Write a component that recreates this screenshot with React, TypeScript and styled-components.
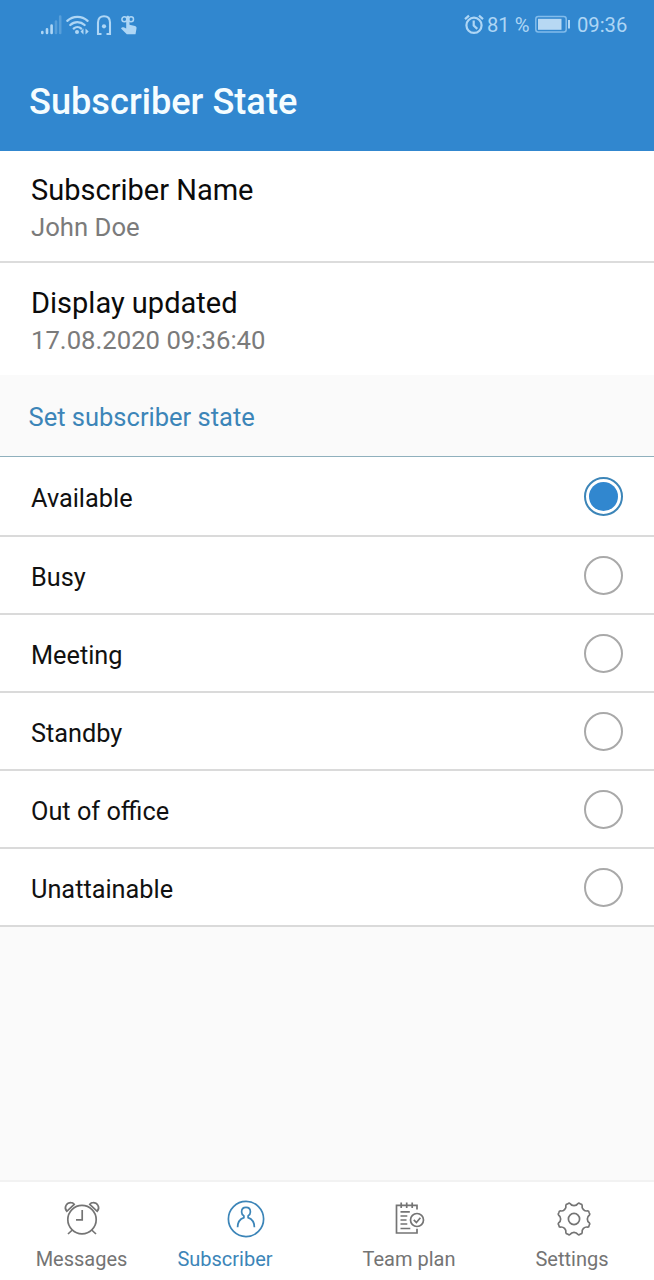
import React from "react";
import styled, { createGlobalStyle } from "styled-components";

const BLUE = "#3187cf";
const ACCENT = "#3c85b8";
const PALE = "#aed6f5";
const GREY = "#747474";

const GlobalStyle = createGlobalStyle`
  * { box-sizing: border-box; }
  body { margin: 0; background: #fafafa; font-family: Roboto, "Liberation Sans", sans-serif; }
  svg { display: block; overflow: visible; }
`;

const Screen = styled.div`
  width: 654px;
  height: 1280px;
  display: flex;
  flex-direction: column;
  overflow: hidden;
  background: #fafafa;
`;

const Header = styled.header`
  height: 151px;
  flex: none;
  background: ${BLUE};
`;

const StatusBar = styled.div`
  height: 50px;
  display: flex;
  justify-content: space-between;
  padding: 0 27px 0 40px;
  color: ${PALE};
`;

const StatusGroup = styled.div`
  display: flex;
  align-items: center;
`;

const StatusText = styled.span<{ $width: number }>`
  width: ${(p) => p.$width}px;
  font-size: 20.2px;
  line-height: 24px;
  white-space: nowrap;
`;

const Title = styled.h1`
  margin: 0;
  padding: 30px 0 0 29px;
  color: #f5fdff;
  font-size: 36.2px;
  line-height: 44px;
  font-weight: 500;
  white-space: nowrap;
`;

const InfoRow = styled.section<{ $divider?: boolean }>`
  height: 112px;
  flex: none;
  padding: ${(p) => (p.$divider ? 21 : 22)}px 31px 0;
  background: #fff;
  border-bottom: ${(p) => (p.$divider ? "2px solid #dcdcdc" : "none")};
`;

const InfoLabel = styled.div`
  font-size: 29px;
  line-height: 36px;
  color: #0b0b0b;
`;

const InfoValue = styled.div`
  padding-top: 3px;
  font-size: 25.7px;
  line-height: 32px;
  color: #7b7b7b;
`;

const SectionTitle = styled.h2`
  height: 82px;
  flex: none;
  margin: 0;
  padding: 2px 0 0 28.5px;
  border-bottom: 1px solid #8fb0bd;
  color: ${ACCENT};
  font-size: 25.5px;
  font-weight: 400;
  line-height: 80px;
`;

const StateList = styled.div`
  flex: none;
  display: flex;
  flex-direction: column;
`;

const StateRow = styled.label`
  height: 78px;
  display: flex;
  align-items: center;
  justify-content: space-between;
  padding: 0 31px;
  background: #fff;
  border-bottom: 2px solid #dadada;
  &:first-child {
    height: 80px;
  }
`;

const StateName = styled.span`
  padding-top: 5px;
  font-size: 25.3px;
  line-height: 32px;
  color: #111;
`;

const Radio = styled.span<{ $checked?: boolean }>`
  width: 39px;
  height: 39px;
  padding: 3px;
  border-radius: 50%;
  border: 2px solid ${(p) => (p.$checked ? ACCENT : "#a9a9a9")};
  background: #fff;
  &::after {
    content: "";
    display: block;
    width: 29px;
    height: 29px;
    border-radius: 50%;
    background: ${(p) => (p.$checked ? BLUE : "transparent")};
  }
`;

const NavBar = styled.nav`
  height: 100px;
  flex: none;
  margin-top: auto;
  display: grid;
  grid-template-columns: 163px 164px 164px 163px;
  background: #fff;
  border-top: 2px solid #f2f2f2;
`;

const NavItem = styled.a<{ $active?: boolean; $shift: number }>`
  display: flex;
  flex-direction: column;
  align-items: center;
  padding-top: 18px;
  padding-right: ${(p) => p.$shift * 2}px;
  color: ${(p) => (p.$active ? ACCENT : GREY)};
`;

const NavIcon = styled.div<{ $shift: number }>`
  width: 38px;
  height: 38px;
  margin-left: ${(p) => p.$shift * 2}px;
`;

const NavLabel = styled.span`
  padding-top: 9px;
  font-size: 20px;
  line-height: 24px;
  white-space: nowrap;
`;

const SystemIcons = () => (
  <svg width="98" height="26" viewBox="0 1 98 24" fill="none" stroke={PALE}>
    <g strokeWidth="2.6" strokeLinecap="round">
      <path d="M2.3 20v1M7 17.3V21M11.6 13.5V21" />
      <path d="M16 9.5V21M20.2 4.5V21" opacity=".3" />
    </g>
    <g strokeWidth="2.3" strokeLinecap="round">
      <path d="M27.3 8.8c5.7-5.3 14.5-5.3 20.3 0" />
      <path d="M30.3 13c4-3.8 10.2-3.8 14.3 0" />
      <path d="M33.7 16.6c2.2-2 5.3-2 7.5 0" />
    </g>
    <circle cx="37" cy="20" r="2" fill={PALE} stroke="none" />
    <path d="M43.5 16.5v6L40.5 19.5zM45.5 16.5v6l3.2-3z" fill={PALE} stroke="none" />
    <path d="M61.5 22H58V10.5C58 6 60.5 4.3 64 4.3s6 1.7 6 6.2V22h-3.5" strokeWidth="2.1" />
    <circle cx="64" cy="14.3" r="2.1" fill={PALE} stroke="none" />
    <g transform="translate(80 3)">
      <circle cx="4.4" cy="4.2" r="2.5" strokeWidth="1.5" />
      <circle cx="11" cy="4.2" r="2.5" strokeWidth="1.5" />
      <path d="M6.2 2.6c0-2.5 3.3-2.5 3.3 0v7.2l5.5 1.1c1.4.4 1.7 1.3 1.5 2.6l-1 5.8H6.8L1 13.4c1-1.6 2.6-1.3 5.2.2z" fill={PALE} stroke="none" />
    </g>
  </svg>
);

const StatusAlarm = () => (
  <svg width="23" height="24" viewBox="0 0 23 24" fill="none" stroke={PALE} strokeWidth="2.2">
    <circle cx="10" cy="12.3" r="7.6" />
    <path d="M9.7 7.6v5l3.6 3.3M1 6.1 5 2.6M19 6.1 15 2.6" />
  </svg>
);

const Battery = () => (
  <svg width="42" height="24" viewBox="0 0 42 24" fill="none">
    <rect x=".8" y="3.5" width="30.4" height="15.6" rx="2.5" stroke="#82bceb" strokeWidth="1.5" />
    <rect x="3" y="5.8" width="23.5" height="11" fill="#b7d8f3" />
    <path d="M34 7v8.5" stroke={PALE} strokeWidth="2" />
  </svg>
);

const MessagesIcon = () => (
  <svg width="38" height="38" viewBox="0 0 38 38" fill="none" stroke="currentColor" strokeWidth="1.7">
    <circle cx="19" cy="19.6" r="14.2" />
    <path d="M19.2 10v9.8h-6.2M9.3 30 5 34M28.7 30l4.3 4M3.8 11.3C.3 7 3.9 2.6 8 2.7c1.4 0 2.4.6 3.2 1.6zM34.2 11.3C37.7 7 34.1 2.6 30 2.7c-1.4 0-2.4.6-3.2 1.6z" />
  </svg>
);

const SubscriberIcon = () => (
  <svg width="38" height="38" viewBox="0 0 38 38" fill="none" stroke="currentColor" strokeWidth="1.7">
    <circle cx="19" cy="19" r="17.6" />
    <path d="M10.6 27.2c0-5.3 2.4-8.2 6.3-9.6v-1.7c-1.6-1-2.3-2.5-2.3-4 0-2.6 1.8-4.5 4.4-4.5s4.4 1.9 4.4 4.5c0 1.5-.7 3-2.3 4v1.7c3.9 1.4 6.3 4.3 6.3 9.6" />
  </svg>
);

const TeamPlanIcon = () => (
  <svg width="38" height="38" viewBox="0 0 38 38" fill="none" stroke="currentColor" strokeWidth="1.7">
    <path d="M27 9.5V5.3H6.5V33H27v-4.2M11.2 2.5V8M16.7 2.5V8M22.2 2.5V8M10.5 11.8h9.3M10.5 16h6.8M10.5 20h6M10.5 24h6.8M10.5 28.5h9.8" />
    <circle cx="27" cy="20" r="6.5" />
    <path d="m23.8 19.8 2.6 2.7 4-4.8" />
  </svg>
);

// Eight-toothed gear outline, one tooth and one valley every 45 degrees.
const gearPath = (() => {
  const at = (deg: number, r: number) => {
    const a = (deg * Math.PI) / 180;
    return `${(19 + r * Math.sin(a)).toFixed(2)} ${(19 - r * Math.cos(a)).toFixed(2)}`;
  };
  let d = "";
  for (let i = 0; i < 8; i++) {
    const t = i * 45 + 22.5;
    d += `${i ? "L" : "M"}${at(t - 8, 16)}Q${at(t - 6, 17)} ${at(t, 16.4)}Q${at(t + 6, 17)} ${at(t + 8, 16)}`;
    d += `C${at(t + 13, 12.8)} ${at(t + 32, 12.8)} ${at(t + 37, 16)}`;
  }
  return d + "Z";
})();

const SettingsIcon = () => (
  <svg width="38" height="38" viewBox="0 0 38 38" fill="none" stroke="currentColor" strokeWidth="1.7">
    <path d={gearPath} strokeLinejoin="round" />
    <circle cx="19" cy="19" r="5.6" />
  </svg>
);

const states = ["Available", "Busy", "Meeting", "Standby", "Out of office", "Unattainable"];

const tabs = [
  { label: "Messages", icon: <MessagesIcon />, shift: 0, iconShift: 0 },
  { label: "Subscriber", icon: <SubscriberIcon />, shift: 20, iconShift: 20.5, active: true },
  { label: "Team plan", icon: <TeamPlanIcon />, shift: 0, iconShift: 0 },
  { label: "Settings", icon: <SettingsIcon />, shift: 0.5, iconShift: 1.5 },
];

export default function App() {
  return (
    <Screen>
      <GlobalStyle />
      <Header>
        <StatusBar>
          <StatusGroup><SystemIcons /></StatusGroup>
          <StatusGroup>
            <StatusAlarm />
            <StatusText $width={48}>81 %</StatusText>
            <Battery />
            <StatusText $width={50}>09:36</StatusText>
          </StatusGroup>
        </StatusBar>
        <Title>Subscriber State</Title>
      </Header>
      <InfoRow $divider>
        <InfoLabel>Subscriber Name</InfoLabel>
        <InfoValue>John Doe</InfoValue>
      </InfoRow>
      <InfoRow>
        <InfoLabel>Display updated</InfoLabel>
        <InfoValue>17.08.2020 09:36:40</InfoValue>
      </InfoRow>
      <SectionTitle>Set subscriber state</SectionTitle>
      <StateList role="radiogroup">
        {states.map((name, i) => (
          <StateRow key={name}>
            <StateName>{name}</StateName>
            <Radio $checked={i === 0} />
          </StateRow>
        ))}
      </StateList>
      <NavBar>
        {tabs.map((t) => (
          <NavItem key={t.label} $active={t.active} $shift={t.shift}>
            <NavIcon $shift={t.iconShift}>{t.icon}</NavIcon>
            <NavLabel>{t.label}</NavLabel>
          </NavItem>
        ))}
      </NavBar>
    </Screen>
  );
}
